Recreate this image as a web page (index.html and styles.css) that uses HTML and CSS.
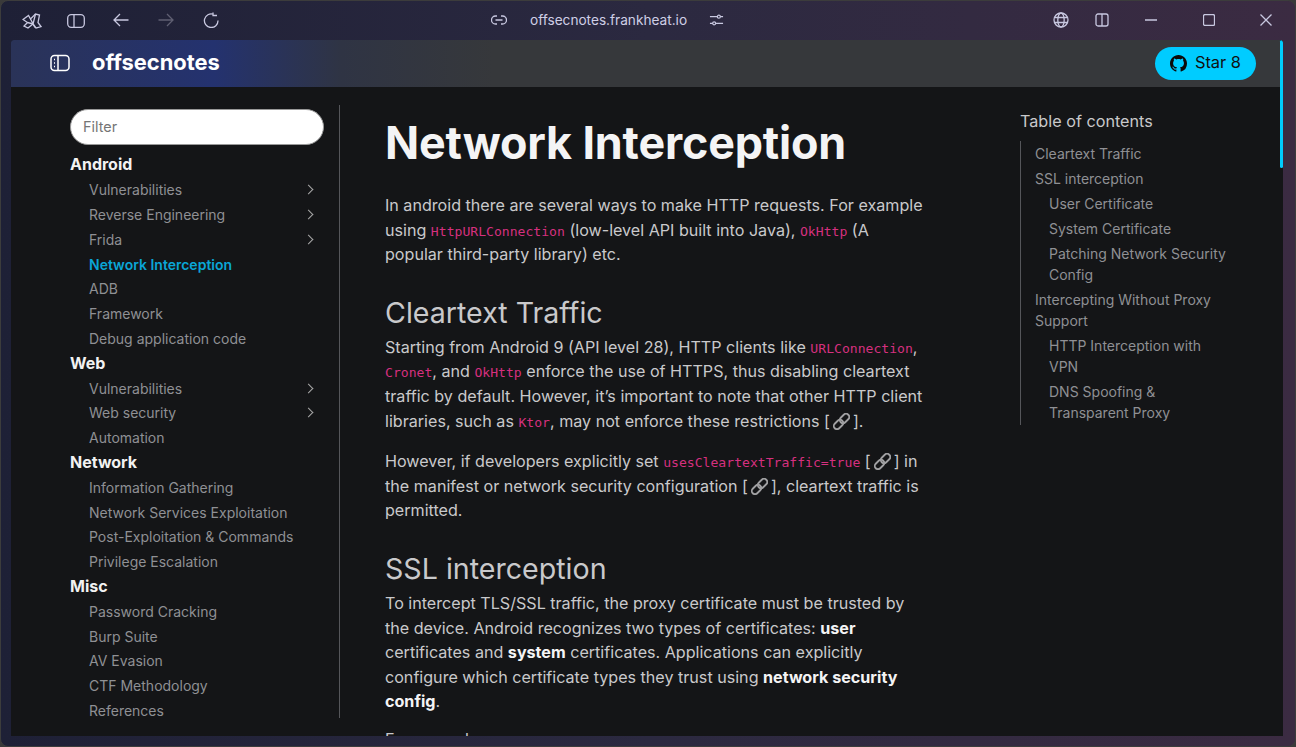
FILE: index.html
```html
<!DOCTYPE html>
<html lang="en">
<head>
<meta charset="utf-8">
<title>Network Interception - offsecnotes</title>
<link rel="stylesheet" href="styles.css">
</head>
<body>
<div class="window">
  <div class="titlebar">
    <div class="tb-left">
      <svg class="ico logo" viewBox="0 0 20 16"><path d="M1 6.500L6.500 2.500 8.500 6 13.500 1 17.500 2 16 9.500 19 13.500 14 15 11 11 6 15 2 13 5.500 9.500z"/><path d="M8.500 6l4.500 8.500M5.500 9.500L11 11M13.500 1L11 11"/></svg>
      <svg class="ico side" viewBox="0 0 18 14"><rect x=".7" y=".7" width="16.600" height="12.600" rx="3.500"/><path d="M7 .7v12.600"/></svg>
      <svg class="ico back" viewBox="0 0 16 14"><path d="M15.500 7H1M7 1L1 7l6 6"/></svg>
      <svg class="ico fwd" viewBox="0 0 16 14"><path d="M.5 7H15M9 1l6 6-6 6"/></svg>
      <svg class="ico reload" viewBox="0 0 16 16"><path d="M10.500 2.300A6.800 6.800 0 1 0 15 8.500M10 .5v3h4"/></svg>
    </div>
    <div class="tb-center">
      <svg class="ico link" viewBox="0 0 16 10"><path d="M6 1H4.500a4 4 0 0 0 0 8H6M10 1h1.500a4 4 0 0 1 0 8H10M4.500 5h7"/></svg>
      <span class="url">offsecnotes.frankheat.io</span>
      <svg class="ico tune" viewBox="0 0 16 14"><path d="M1 3.500h8M12 3.500h3M1 10.500h3M7 10.500h8"/><circle cx="10.500" cy="3.500" r="1.600"/><circle cx="5.500" cy="10.500" r="1.600"/></svg>
    </div>
    <div class="tb-right">
      <svg class="ico globe" viewBox="0 0 16 16"><circle cx="8" cy="8" r="7"/><ellipse cx="8" cy="8" rx="3.200" ry="7"/><path d="M1.500 5.500h13M1.500 10.500h13"/></svg>
      <svg class="ico split" viewBox="0 0 14 14"><rect x="1" y="1" width="12" height="12" rx="2"/><path d="M7 1v12"/></svg>
      <svg class="ico min" viewBox="0 0 14 14"><path d="M1 7h12"/></svg>
      <svg class="ico max" viewBox="0 0 12 12"><rect x=".5" y=".5" width="11" height="11" rx="1.500"/></svg>
      <svg class="ico close" viewBox="0 0 14 14"><path d="M1.500 1.500l11 11M12.500 1.500l-11 11"/></svg>
    </div>
  </div>

  <div class="viewport">
    <div class="scrollthumb"></div>
    <header class="topbar">
      <div class="brand">
        <svg class="menu-ico" viewBox="0 0 20 18"><rect x="1" y="1.500" width="18" height="15" rx="3.500"/><path d="M8 1.500v15"/><path d="M4 5.500h1M4 9h1M4 12.500h1"/></svg>
        <span class="brand-name">offsecnotes</span>
      </div>
      <a class="star">
        <svg viewBox="0 0 16 16"><path d="M8 0C3.580 0 0 3.580 0 8c0 3.540 2.290 6.530 5.470 7.590.4.070.55-.17.55-.38 0-.19-.010-.82-.010-1.490-2.010.37-2.530-.49-2.690-.94-.09-.23-.48-.94-.82-1.130-.28-.15-.68-.52-.010-.53.630-.010 1.080.58 1.230.82.720 1.210 1.870.87 2.330.66.070-.52.280-.87.510-1.070-1.780-.2-3.640-.89-3.640-3.950 0-.87.310-1.590.82-2.150-.08-.2-.36-1.020.08-2.120 0 0 .67-.21 2.200.82.640-.18 1.320-.27 2-.27s1.360.09 2 .27c1.530-1.040 2.200-.82 2.200-.82.440 1.100.16 1.920.08 2.120.51.560.82 1.270.82 2.150 0 3.070-1.870 3.750-3.650 3.950.290.25.540.73.540 1.480 0 1.070-.010 1.930-.010 2.200 0 .210.150.460.550.380A8.010 8.010 0 0 0 16 8c0-4.420-3.580-8-8-8z"/></svg>
        <span>Star 8</span>
      </a>
    </header>

    <div class="page">
      <aside class="sidebar">
        <input class="filter" type="text" placeholder="Filter">
        <div class="nav-head">Android</div>
        <a class="nav-item more">Vulnerabilities</a>
        <a class="nav-item more">Reverse Engineering</a>
        <a class="nav-item more">Frida</a>
        <a class="nav-item active">Network Interception</a>
        <a class="nav-item">ADB</a>
        <a class="nav-item">Framework</a>
        <a class="nav-item">Debug application code</a>
        <div class="nav-head">Web</div>
        <a class="nav-item more">Vulnerabilities</a>
        <a class="nav-item more">Web security</a>
        <a class="nav-item">Automation</a>
        <div class="nav-head">Network</div>
        <a class="nav-item">Information Gathering</a>
        <a class="nav-item">Network Services Exploitation</a>
        <a class="nav-item">Post-Exploitation &amp; Commands</a>
        <a class="nav-item">Privilege Escalation</a>
        <div class="nav-head">Misc</div>
        <a class="nav-item">Password Cracking</a>
        <a class="nav-item">Burp Suite</a>
        <a class="nav-item">AV Evasion</a>
        <a class="nav-item">CTF Methodology</a>
        <a class="nav-item">References</a>
      </aside>

      <main class="content">
        <h1>Network Interception</h1>
        <p>In android there are several ways to make HTTP requests. For example using <code>HttpURLConnection</code> (low-level API built into Java), <code>OkHttp</code> (A popular third-party library) etc.</p>
        <h2>Cleartext Traffic</h2>
        <p>Starting from Android 9 (API level 28), HTTP clients like <code>URLConnection</code>, <code>Cronet</code>, and <code>OkHttp</code> enforce the use of HTTPS, thus disabling cleartext traffic by default. However, it’s important to note that other HTTP client libraries, such as <code>Ktor</code>, may not enforce these restrictions [<svg class="chain" viewBox="0 0 16 16"><g transform="rotate(-45 8 8)"><rect x="-1" y="5" width="10" height="6" rx="3"/><rect x="7" y="5" width="10" height="6" rx="3"/></g></svg>].</p>
        <p>However, if developers explicitly set <code>usesCleartextTraffic=true</code> [<svg class="chain" viewBox="0 0 16 16"><g transform="rotate(-45 8 8)"><rect x="-1" y="5" width="10" height="6" rx="3"/><rect x="7" y="5" width="10" height="6" rx="3"/></g></svg>] in the manifest or network security configuration [<svg class="chain" viewBox="0 0 16 16"><g transform="rotate(-45 8 8)"><rect x="-1" y="5" width="10" height="6" rx="3"/><rect x="7" y="5" width="10" height="6" rx="3"/></g></svg>], cleartext traffic is permitted.</p>
        <h2>SSL interception</h2>
        <p class="tight">To intercept TLS/SSL traffic, the proxy certificate must be trusted by the device. Android recognizes two types of certificates: <strong>user</strong> certificates and <strong>system</strong> certificates. Applications can explicitly configure which certificate types they trust using <strong>network security config</strong>.</p>
        <p>For example:</p>
      </main>

      <nav class="toc">
        <div class="toc-title">Table of contents</div>
        <ul class="toc-list">
          <li>Cleartext Traffic</li>
          <li>SSL interception</li>
          <li class="sub">User Certificate</li>
          <li class="sub">System Certificate</li>
          <li class="sub">Patching Network Security Config</li>
          <li>Intercepting Without Proxy Support</li>
          <li class="sub">HTTP Interception with VPN</li>
          <li class="sub">DNS Spoofing &amp; Transparent Proxy</li>
        </ul>
      </nav>
    </div>
  </div>
</div>
</body>
</html>
```
FILE: styles.css
```css
html, body {
	margin: 0;
	height: 100%;
	overflow: hidden;
	background: #3a3a3a;
}
body {
	font-family: Inter, "Liberation Sans", sans-serif;
	color: #c9c9cb;
}
.window {
	height: 747px;
	box-sizing: border-box;
	border: 1px solid #3c3c3c;
	border-radius: 8px;
	background: linear-gradient(90deg, #1e2036 0%, #2b2940 50%, #3b2b42 100%);
	display: flex;
	flex-direction: column;
	padding: 0 12px 10px 10px;
	overflow: hidden;
}
/* browser chrome */
.titlebar {
	height: 39px;
	flex: none;
	display: flex;
	align-items: center;
	justify-content: space-between;
	position: relative;
	padding-bottom: 2px;
	box-sizing: border-box;
}
.ico {
	fill: none;
	stroke: #c8c8e0;
	stroke-width: 1.300;
	display: block;
	flex: none;
}
.tb-left, .tb-right {
	display: flex;
	align-items: center;
}
.tb-center {
	position: absolute;
	left: 480px;
	top: 0;
	height: 37px;
	display: flex;
	align-items: center;
}
.url {
	font-size: 13.650px;
	color: #cfcfe6;
	margin: 0 22px 0 23px;
}
.logo { width: 20px; height: 16px; margin: 3px 0 0 11px; }
.side { width: 18px; height: 14px; margin: 3px 0 0 25px; }
.back { width: 16px; height: 14px; margin: 0 0 0 28px; }
.fwd { width: 16px; height: 14px; margin: 0 0 0 29px; stroke: #5f5f72; }
.reload { width: 16px; height: 16px; margin: 0 0 0 29px; }
.link { width: 16px; height: 10px; }
.tune { width: 15px; height: 14px; }
.globe { width: 16px; height: 16px; }
.split { width: 14px; height: 14px; margin-left: 26px; }
.min { width: 14px; height: 14px; margin-left: 35px; }
.max { width: 12px; height: 12px; margin-left: 45px; }
.close { width: 14px; height: 14px; margin-left: 44px; margin-right: 10px; }
/* site */
.viewport {
	flex: 1;
	min-height: 0;
	background: #141517;
	border-radius: 3px 3px 0 0;
	overflow: hidden;
	position: relative;
}
.scrollthumb {
	position: absolute;
	right: 0;
	top: 0;
	width: 3px;
	height: 128px;
	background: #00ccff;
	border-radius: 2px;
	z-index: 2;
}
.topbar {
	height: 47px;
	margin-right: 3px;
	display: flex;
	align-items: center;
	justify-content: space-between;
	background: linear-gradient(90deg, #2a3358 0%, #24326f 16%, #2f3444 26%, #36383b 38%, #36383b 100%);
	padding: 0 24px 0 39px;
}
.brand {
	display: flex;
	align-items: center;
	gap: 22px;
	margin-top: -4px;
}
.menu-ico {
	width: 20px;
	height: 18px;
	fill: none;
	stroke: #fff;
	stroke-width: 1.500;
	margin-top: 3px;
}
.brand-name {
	font-size: 21.900px;
	font-weight: 700;
	color: #fff;
}
.star {
	display: flex;
	align-items: center;
	gap: 8px;
	height: 33px;
	padding: 0 15px;
	border-radius: 17px;
	background: #00ccff;
	color: #111;
	font-size: 16.400px;
}
.star span { margin-top: -3px; }
.star svg {
	width: 17px;
	height: 17px;
	fill: #0b0b0b;
}
.page {
	display: flex;
	align-items: flex-start;
	padding-top: 18px;
}
.sidebar {
	width: 270px;
	height: 613px;
	margin-left: 59px;
	box-sizing: border-box;
	padding-right: 15px;
	border-right: 1px solid #55565a;
	flex: none;
	display: flex;
	flex-direction: column;
	font-size: 14px;
}
.filter {
	box-sizing: border-box;
	width: 254px;
	height: 36px;
	padding: 0 12px 2px;
	border: 1px solid #999;
	border-radius: 18px;
	background: #fff;
	font: 14.400px Inter, sans-serif;
	margin: 4px 0 8.400px;
	flex: none;
}
.filter::placeholder { color: #757575; }
.nav-head {
	font-size: 16px;
	font-weight: 700;
	color: #f2f2f2;
	line-height: 23.400px;
	padding-bottom: 1.400px;
}
.nav-item {
	display: block;
	padding-left: 19px;
	line-height: 24.800px;
	color: #8f9094;
	position: relative;
}
.nav-item.active {
	color: #0aa5d6;
	font-weight: 600;
}
.nav-item.more::after {
	content: "";
	position: absolute;
	right: 12px;
	top: 8px;
	width: 6px;
	height: 6px;
	border-top: 1.500px solid #a8a8a8;
	border-right: 1.500px solid #a8a8a8;
	transform: rotate(45deg);
}
.content {
	width: 540px;
	margin-left: 45px;
	flex: none;
	font-size: 16.120px;
	line-height: 24.600px;
}
.content h1 {
	font-size: 44.800px;
	font-weight: 700;
	line-height: 54px;
	color: #f4f4f5;
	letter-spacing: -.150px;
	margin: 11px 0 23px;
}
.content h2 {
	font-size: 28.600px;
	font-weight: 400;
	line-height: 36px;
	color: #c9c9cb;
	margin: 28px 0 4px;
}
.content p {
	margin: 0 0 16px;
}
.content p.tight {
	margin-bottom: 13px;
}
.content code {
	font-family: "DejaVu Sans Mono", monospace;
	font-size: 13.100px;
	line-height: 1;
	color: #d6307f;
}
.content strong {
	color: #f4f4f5;
	font-weight: 700;
}
.chain {
	width: 17px;
	height: 17px;
	margin: 0 3px;
	vertical-align: -3px;
	fill: none;
	stroke: #a0a0a2;
	stroke-width: 1.700;
}
.toc {
	width: 212px;
	margin-left: 95px;
	flex: none;
	font-size: 14px;
	line-height: 21px;
	color: #8f9094;
}
.toc-title {
	font-size: 16.200px;
	color: #c9c9cb;
	margin: 4px 0 8px;
	line-height: 24px;
}
.toc-list {
	list-style: none;
	margin: 0;
	padding: 0 0 0 14px;
	border-left: 1px solid #55565a;
}
.toc-list li { padding: 2px 0; }
.toc-list li.sub { padding-left: 14px; }
```
